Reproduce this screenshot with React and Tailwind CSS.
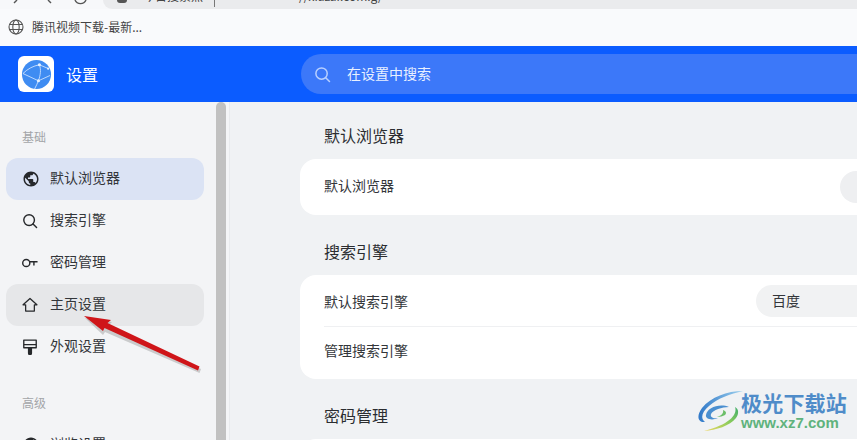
const FONT = { fontFamily: '"Noto Sans CJK SC", "Liberation Sans", sans-serif' };

function Globe({ className }) {
  return (
    <svg viewBox="0 0 24 24" className={className} fill="currentColor">
      <path d="M12 2C6.48 2 2 6.48 2 12s4.48 10 10 10 10-4.48 10-10S17.52 2 12 2zm-1 17.93c-3.95-.49-7-3.85-7-7.93 0-.62.08-1.21.21-1.79L9 15v1c0 1.1.9 2 2 2v1.93zm6.9-2.54c-.26-.81-1-1.39-1.9-1.39h-1v-3c0-.55-.45-1-1-1H8v-2h2c.55 0 1-.45 1-1V7h2c1.1 0 2-.9 2-2v-.41c2.93 1.19 5 4.06 5 7.41 0 2.08-.8 3.97-2.1 5.39z" />
    </svg>
  );
}
function SearchI({ className }) {
  return (
    <svg viewBox="0 0 18 18" className={className} fill="none" stroke="currentColor" strokeWidth="1.6" strokeLinecap="round">
      <circle cx="8" cy="8" r="6" />
      <path d="M12.4 12.4 16.4 16.4" />
    </svg>
  );
}
function KeyI({ className }) {
  return (
    <svg viewBox="0 0 18 18" className={className} fill="none" stroke="currentColor" strokeWidth="1.6">
      <circle cx="4.8" cy="9" r="4" />
      <path d="M8.8 7.6H17.5M13.4 7.6v4.2" />
    </svg>
  );
}
function HomeI({ className }) {
  return (
    <svg viewBox="0 0 18 18" className={className} fill="none" stroke="currentColor" strokeWidth="1.4" strokeLinejoin="round">
      <path d="M9 1.6 1.2 8.8h2.9v7h9.8v-7h2.9z" />
    </svg>
  );
}
function BrushI({ className }) {
  return (
    <svg viewBox="0 0 18 18" className={className} fill="none" stroke="currentColor" strokeWidth="1.5" strokeLinejoin="round">
      <path d="M2 1.2h14v5.2H2z" />
      <path d="M2 6.4v3.4h14V6.4" />
      <path d="M7.4 10h3.2v6a1.6 1.6 0 0 1-3.2 0z" fill="currentColor" />
    </svg>
  );
}
function AppLogo() {
  return (
    <div className="flex h-9 w-9 items-center justify-center rounded-md bg-white">
      <svg viewBox="0 0 32 32" className="h-[31px] w-[31px]">
        <circle cx="16" cy="16" r="15" fill="#3f8cf2" />
        <g stroke="#cfe3ff" strokeWidth="0.9" fill="none">
          <path d="M2 15C7 10 13 7 19 6M19 6 28.5 10M19 6C21 11 20 17 18 22.5M2 15 18 22.5M18 22.5 30 17M18 22.5C17 25 15.5 28 14 31" />
        </g>
        <g fill="#e8f2ff">
          <circle cx="19" cy="6" r="1.6" />
          <circle cx="18" cy="22.5" r="1.6" />
          <circle cx="28" cy="10" r="1.1" />
        </g>
      </svg>
    </div>
  );
}

function NavItem({ icon, label, className = "" }) {
  return (
    <div className={`flex h-[42px] shrink-0 items-center rounded-xl pl-4 ${className}`}>
      <span className="flex w-7 shrink-0 text-[#26282b]">{icon}</span>
      <span className="whitespace-nowrap pb-1 text-sm text-[#33363a]">{label}</span>
    </div>
  );
}

function Section({ title, children }) {
  return (
    <section className="mb-[26px]">
      <h2 className="mb-[10px] ml-6 h-6 text-base font-normal leading-[20px] text-[#2b2d30]">{title}</h2>
      <div className="w-[620px] rounded-2xl bg-white">{children}</div>
    </section>
  );
}

function Watermark() {
  return (
    <div className="absolute left-[697px] top-[388px] flex items-start">
      <svg viewBox="0 0 46 44" className="h-[44px] w-[46px]">
        <defs>
          <linearGradient id="sw1" x1="0" y1="0" x2="1" y2="0">
            <stop offset="0" stopColor="#2f78c8" />
            <stop offset="1" stopColor="#9fd2ee" />
          </linearGradient>
          <linearGradient id="sw2" x1="0" y1="1" x2="1" y2="0">
            <stop offset="0" stopColor="#f0d860" />
            <stop offset="0.55" stopColor="#8ccc5c" />
            <stop offset="1" stopColor="#3fae6a" />
          </linearGradient>
        </defs>
        <path d="M46 3C30 3 14 9 5 20-1 28 1 35 8 34 3 30 5 24 12 18 21 10 33 6 46 3z" fill="url(#sw1)" />
        <path d="M32 19C22 15 10 20 9 27c-1 4 6 6 12 3-5 1-8-1-7-4 2-4 11-7 18-7z" fill="#4a8fd0" />
        <path d="M38 19c3 8-7 18-31 24 12-1 26-5 32-13 3-4 3-9-1-11z" fill="url(#sw2)" />
        <path d="M26 22c3 1 4 3 2 5-2 1-5 2-8 2 3-1 7-3 6-7z" fill="#6cbf6a" />
      </svg>
      <div className="-ml-[2px] mt-[2px] flex flex-col">
        <span className="text-[21px] font-bold leading-[24px] tracking-[0.2px] text-[#4f8cc9]">极光下载站</span>
        <span className="mt-[1px] text-[15px] font-bold leading-[16px] text-[#5fb37d]" style={{ fontFamily: '"Liberation Sans", sans-serif' }}>www.xz7.com</span>
      </div>
    </div>
  );
}

function RedArrow() {
  return (
    <svg className="pointer-events-none absolute left-[78px] top-[310px] h-[70px] w-[130px]" viewBox="0 0 130 70">
      <path d="M6 7 33 11 30 14 122 58 120.5 62 26 21 24 24z" fill="#7f7f7f" opacity="0.35" transform="translate(1 1)" />
      <path d="M6 6 33 10 29.5 13 121.5 56.5 120 60.5 26.5 18 25 21z" fill="#cf1519" />
    </svg>
  );
}

export default function App() {
  return (
    <div className="relative flex h-[440px] w-[857px] flex-col overflow-hidden bg-[#f1f3f5]" style={FONT}>
      {/* cropped browser chrome */}
      <div className="flex h-[9px] shrink-0 overflow-hidden bg-[#f7f8fa]">
        <div className="flex w-[103px] shrink-0 items-end text-[#555]">
          <svg viewBox="0 0 100 9" className="h-[9px] w-[100px]" fill="none" stroke="currentColor" strokeWidth="1.4">
            <path d="M17 0 14 3" />
            <path d="M48 0 51 3" />
            <path d="M75 0a6 6 0 0 0 11 0" />
          </svg>
        </div>
        <div className="flex flex-1 items-start overflow-hidden rounded-bl-[10px] bg-[#eaebed] pl-[14px]">
          <span className="h-[3px] w-[10px] shrink-0 rounded-b-full bg-[#555]" />
          <span className="-mt-[12px] ml-4 w-[62px] shrink-0 overflow-hidden whitespace-nowrap text-xs leading-[16px] text-[#444]">今日搜索热</span>
          <span className="ml-[9px] h-[7px] w-px shrink-0 bg-[#777]" />
          <span className="-mt-[12px] ml-[84px] shrink-0 whitespace-nowrap text-xs leading-[16px] text-[#444]">//xiazai.com.g/</span>
        </div>
      </div>
      {/* bookmarks */}
      <div className="flex h-[37px] shrink-0 items-center bg-[#f9fafc] pb-[1px] pl-2 text-xs text-[#444]">
        <svg viewBox="0 0 16 16" className="mr-2 h-4 w-4 text-[#555]" fill="none" stroke="currentColor" strokeWidth="1.1">
          <circle cx="8" cy="8" r="7" />
          <ellipse cx="8" cy="8" rx="3.2" ry="7" />
          <path d="M1.5 5.5h13M1.5 10.5h13" />
        </svg>
        <span>腾讯视频下载-最新...</span>
      </div>
      {/* header */}
      <header className="flex h-14 shrink-0 items-center bg-[#0b5cff] text-white">
        <div className="ml-[18px] flex w-[283px] shrink-0 items-center gap-3">
          <AppLogo />
          <span className="text-base">设置</span>
        </div>
        <div className="flex h-10 flex-1 items-center rounded-l-[20px] bg-[#3c78f9] pl-[13px] text-sm">
          <SearchI className="mr-4 h-[17px] w-[17px] text-[#b9d0ff]" />
          <span className="pb-[3px] text-[#e9f0ff]">在设置中搜索</span>
        </div>
      </header>
      {/* body */}
      <div className="flex min-h-0 flex-1">
        <aside className="flex w-[216px] shrink-0 flex-col overflow-hidden bg-[#f3f4f6] pl-[6px] pr-3">
          <div className="mb-[13px] mt-[27px] h-4 shrink-0 pl-4 text-xs leading-4 text-[#a3a5a8]">基础</div>
          <NavItem label="默认浏览器" className="bg-[#dbe3f4]" icon={<Globe className="h-[18px] w-[18px]" />} />
          <NavItem label="搜索引擎" icon={<SearchI className="h-4 w-4" />} />
          <NavItem label="密码管理" icon={<KeyI className="h-4 w-4" />} />
          <NavItem label="主页设置" className="bg-[#e6e7e9]" icon={<HomeI className="h-4 w-4" />} />
          <NavItem label="外观设置" icon={<BrushI className="h-4 w-4" />} />
          <div className="mb-[13px] mt-[27px] h-4 shrink-0 pl-4 text-xs leading-4 text-[#a3a5a8]">高级</div>
          <NavItem label="浏览设置" icon={<Globe className="h-[18px] w-[18px]" />} />
        </aside>
        <div className="w-[10px] shrink-0 rounded-t-[5px] bg-[#c1c1c1]" />
        <div className="w-1 shrink-0 border-r border-[#e8eaed] bg-[#f4f5f7]" />
        <main className="min-w-0 flex-1 overflow-hidden bg-[#f0f2f4] pl-[70px] pt-[23px]">
          <Section title="默认浏览器">
            <div className="flex h-14 items-center pl-6 text-sm text-[#33363a]">
              <span className="w-[516px] shrink-0 whitespace-nowrap pb-1">默认浏览器</span>
              <div className="h-8 w-20 shrink-0 rounded-full bg-[#eeeff1]" />
            </div>
          </Section>
          <Section title="搜索引擎">
            <div className="ml-6 flex h-[52px] items-center border-b border-[#eff0f2] text-sm text-[#33363a]">
              <span className="w-[432px] shrink-0 whitespace-nowrap">默认搜索引擎</span>
              <div className="flex h-8 w-60 shrink-0 items-center rounded-full bg-[#f1f2f3] pb-[1px] pl-4">百度</div>
            </div>
            <div className="ml-6 flex h-[52px] items-center text-sm text-[#33363a]">
              <span className="whitespace-nowrap pb-[6px]">管理搜索引擎</span>
            </div>
          </Section>
          <Section title="密码管理">
            <div className="h-14" />
          </Section>
        </main>
      </div>
      <RedArrow />
      <Watermark />
    </div>
  );
}
